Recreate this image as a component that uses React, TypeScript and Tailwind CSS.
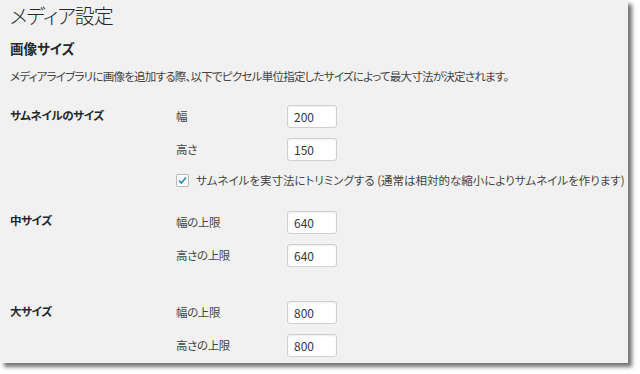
import React from "react";

const font = "font-['Noto_Sans_CJK_JP','Noto_Sans',sans-serif] [font-feature-settings:'palt']";

type Field = { label: string; value: string };

const SizeInput: React.FC<{ value: string }> = ({ value }) => (
  <input
    type="text"
    defaultValue={value}
    className={`${font} h-[23px] w-[50px] rounded-[3px] border border-[#cfcfcf] bg-white px-[6px] text-[12px] text-[#32373c] shadow-[inset_0_1px_2px_rgba(0,0,0,0.07)] outline-none`}
  />
);

const SizeRow: React.FC<{
  title: string;
  titleClass: string;
  fields: Field[];
  className?: string;
  children?: React.ReactNode;
}> = ({ title, titleClass, fields, className, children }) => (
  <div className={`flex ${className ?? ""}`}>
    <div className={`w-[166px] shrink-0 text-[11.5px] font-bold leading-[18px] tracking-[-0.4px] text-[#23282d] ${titleClass}`}>
      {title}
    </div>
    <div className="flex flex-col gap-[10px]">
      {fields.map((f) => (
        <div key={f.label} className="flex items-center">
          <span className="w-[111px] text-[11.5px] tracking-[-0.4px] text-[#444]">{f.label}</span>
          <SizeInput value={f.value} />
        </div>
      ))}
      {children}
    </div>
  </div>
);

export default function App() {
  return (
    <div className={`${font} h-[374px] w-[640px] bg-white`}>
      <div className="h-[363px] w-[628px] bg-[#f1f1f1] pl-[10px] pt-[3px] shadow-[4px_4px_4px_rgba(0,0,0,0.55)]">
        <h1 className="text-[20px] font-light leading-[26px] tracking-[-1px] text-[#23282d]">メディア設定</h1>
        <h2 className="mt-[9px] text-[13.5px] font-bold leading-[20px] text-[#23282d]">画像サイズ</h2>
        <p className="mt-[9px] whitespace-nowrap text-[11.5px] leading-[18px] tracking-[-0.75px] text-[#444]">
          メディアライブラリに画像を追加する際、以下でピクセル単位指定したサイズによって最大寸法が決定されます。
        </p>

        <SizeRow
          className="mt-[20px]"
          title="サムネイルのサイズ"
          titleClass="pt-[1px]"
          fields={[
            { label: "幅", value: "200" },
            { label: "高さ", value: "150" },
          ]}
        >
          <label className="flex items-center gap-[7px] whitespace-nowrap text-[11.5px] leading-[18px] text-[#444]">
            <span className="flex h-[13px] w-[13px] shrink-0 items-center justify-center rounded-[2px] border border-[#b4b9be] bg-white">
              <svg viewBox="0 0 12 12" className="h-[11px] w-[11px]">
                <path d="M2.2 6.2 L4.8 8.8 L9.8 2.8" fill="none" stroke="#1e8cbe" strokeWidth="1.8" />
              </svg>
            </span>
            <span>
              サムネイルを実寸法にトリミングする (通常は相対的な縮小によりサムネイルを作ります)
            </span>
          </label>
        </SizeRow>

        <SizeRow
          className="mt-[22px]"
          title="中サイズ"
          titleClass="pt-0 leading-[14px]"
          fields={[
            { label: "幅の上限", value: "640" },
            { label: "高さの上限", value: "640" },
          ]}
        />

        <SizeRow
          className="mt-[34px]"
          title="大サイズ"
          titleClass="pt-[1px]"
          fields={[
            { label: "幅の上限", value: "800" },
            { label: "高さの上限", value: "800" },
          ]}
        />
      </div>
    </div>
  );
}
